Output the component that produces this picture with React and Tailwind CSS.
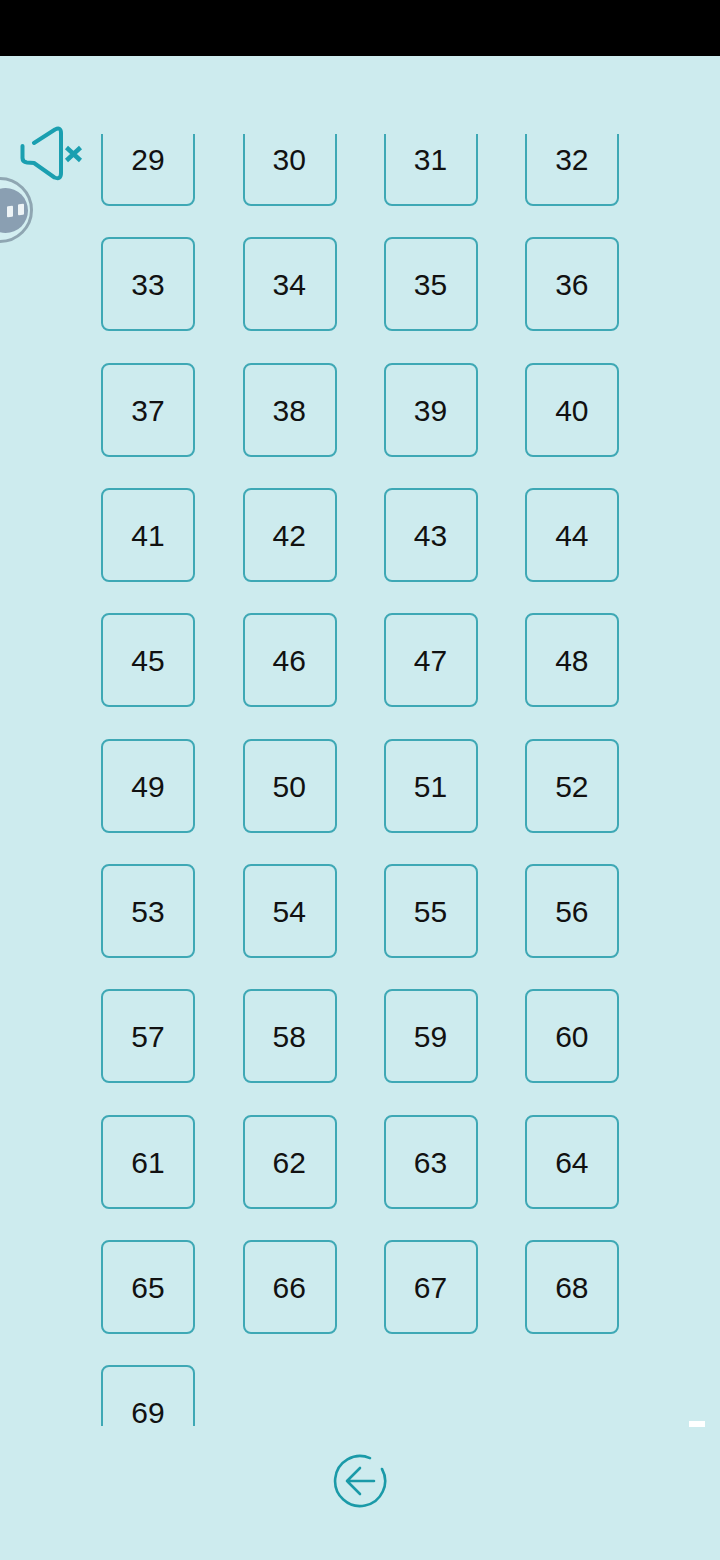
const numbers = Array.from({ length: 41 }, (_, i) => i + 29);

const MuteIcon = () => (
  <svg width="66" height="58" viewBox="0 0 66 58" fill="none" stroke="#1a9fb0" strokeLinecap="round" strokeLinejoin="round">
    <path
      d="M 15 17 L 36 3.5 Q 42 0.5 42 7 L 42 47 Q 42 54 35.5 51.5 L 15 37 L 8 36.5 Q 3.5 36 3.5 32 L 3.5 20"
      strokeWidth="4"
    />
    <path d="M 47.5 21.5 L 61.5 34.5 M 61.5 21.5 L 47.5 34.5" strokeWidth="4.5" strokeLinecap="butt" />
  </svg>
);

const BackIcon = () => (
  <svg width="54" height="54" viewBox="0 0 54 54" fill="none" stroke="#1a9aa8" strokeWidth="2.6" strokeLinecap="round" strokeLinejoin="round">
    <path d="M 37 4.1 A 25 25 0 1 0 49 15" />
    <path d="M 14 27 L 41 27 M 27 14 L 14 27 L 27 40" />
  </svg>
);

export default function App() {
  return (
    <div className="relative flex h-[1560px] w-[720px] flex-col overflow-hidden bg-[#cdebee] font-['Liberation_Sans',Arial,sans-serif]">
      <div className="h-14 bg-black" />

      {/* number list, scrolled */}
      <div className="mt-[78px] h-[1292px] overflow-hidden">
        <div className="-mt-[22px] ml-[101.4px] grid w-[518px] grid-cols-[repeat(4,94px)] gap-x-[47.33px] gap-y-[31.33px]">
          {numbers.map((n) => (
            <div
              key={n}
              className="flex h-[94px] w-[94px] items-center justify-center rounded-lg border-2 border-[#3ea8b5] pr-px pt-px text-[30px] text-[#111]"
            >
              {n}
            </div>
          ))}
        </div>
      </div>

      <div className="flex flex-1 justify-center pt-[28px]">
        <BackIcon />
      </div>

      {/* floating controls */}
      <div className="absolute -left-[33px] top-[126px] flex flex-col items-start">
        <div className="ml-[52px]">
          <MuteIcon />
        </div>
        <div className="-mt-[7px] flex h-[66px] w-[66px] items-center rounded-full border-[3px] border-[#8fa6b2] bg-[#d3eef1]">
          <div className="ml-[13px] flex h-[45px] w-[45px] items-center gap-[5px] rounded-full bg-[#8a9fb2] pl-[24px]">
            <span className="mt-[2px] h-[11px] w-[6px] shrink-0 -skew-y-6 rounded-[1px] bg-[#eef4f6]" />
            <span className="-mt-[2px] h-[11px] w-[6px] shrink-0 -skew-y-6 rounded-[1px] bg-[#eef4f6]" />
          </div>
        </div>
      </div>
      <div className="absolute left-[689px] top-[1421px] h-[6px] w-4 bg-white" />
    </div>
  );
}
